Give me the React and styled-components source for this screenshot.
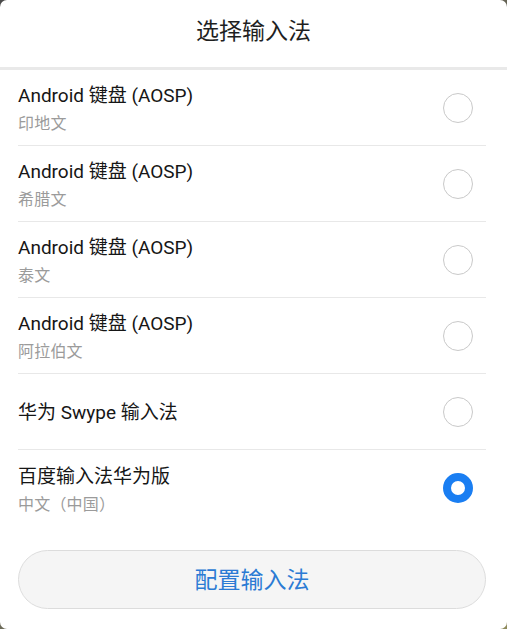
import React from "react";
import styled, { createGlobalStyle } from "styled-components";

const Global = createGlobalStyle`
  html, body {
    margin: 0;
    padding: 0;
    background: linear-gradient(135deg, #4a4a4a 0%, #6f6d5a 60%, #8e8a5c 100%);
  }
  body {
    font-family: Roboto, "Noto Sans CJK SC", sans-serif;
  }
`;

const Dialog = styled.div`
  width: 507px;
  height: 629px;
  background: #ffffff;
  border-radius: 7px;
  overflow: hidden;
  display: flex;
  flex-direction: column;
`;

const Header = styled.div`
  height: 67px;
  box-sizing: border-box;
  display: flex;
  align-items: center;
  justify-content: center;
  font-size: 23px;
  line-height: 30px;
  color: #1f1f1f;
  border-bottom: 3px solid #e9e9e9;
  padding-bottom: 4px;
  height: 70px;
`;

const List = styled.div`
  margin: 0 21px 0 18px;
  display: flex;
  flex-direction: column;
`;

const Row = styled.div`
  height: 76px;
  box-sizing: border-box;
  display: flex;
  align-items: center;
  justify-content: space-between;
  padding-right: 13px;
  border-bottom: ${(p) => (p.$last ? "none" : "1px solid #e8e8e8")};
`;

const Texts = styled.div`
  display: flex;
  flex-direction: column;
  gap: 5px;
  padding-top: 2px;
`;

const Title = styled.div`
  font-size: 19px;
  line-height: 26px;
  color: #161616;
`;

const Sub = styled.div`
  font-size: 16px;
  line-height: 20px;
  color: #9b9b9b;
  letter-spacing: 0.2px;
`;

const Radio = styled.div`
  width: 30px;
  height: 30px;
  box-sizing: border-box;
  border-radius: 50%;
  border: ${(p) => (p.$checked ? "8px solid #1a7ef2" : "1.5px solid #c9c9c9")};
  background: #ffffff;
  flex: none;
`;

const Footer = styled.div`
  padding: 24px 21px 0 18px;
`;

const Button = styled.button`
  width: 100%;
  height: 59px;
  border-radius: 30px;
  border: 1px solid #dcdcdc;
  background: #f5f5f5;
  color: #2b7bd4;
  font-family: Roboto, "Noto Sans CJK SC", sans-serif;
  font-size: 23px;
  display: flex;
  align-items: center;
  justify-content: center;
  padding: 0 0 3px 0;
`;

const items = [
  { title: "Android 键盘 (AOSP)", sub: "印地文" },
  { title: "Android 键盘 (AOSP)", sub: "希腊文" },
  { title: "Android 键盘 (AOSP)", sub: "泰文" },
  { title: "Android 键盘 (AOSP)", sub: "阿拉伯文" },
  { title: "华为 Swype 输入法" },
  { title: "百度输入法华为版", sub: "中文（中国）", checked: true },
];

export default function App() {
  return (
    <>
      <Global />
      <Dialog>
        <Header>选择输入法</Header>
        <List>
          {items.map((it, i) => (
            <Row key={i} $last={i === items.length - 1}>
              <Texts>
                <Title>{it.title}</Title>
                {it.sub && <Sub>{it.sub}</Sub>}
              </Texts>
              <Radio $checked={!!it.checked} />
            </Row>
          ))}
        </List>
        <Footer>
          <Button>配置输入法</Button>
        </Footer>
      </Dialog>
    </>
  );
}
